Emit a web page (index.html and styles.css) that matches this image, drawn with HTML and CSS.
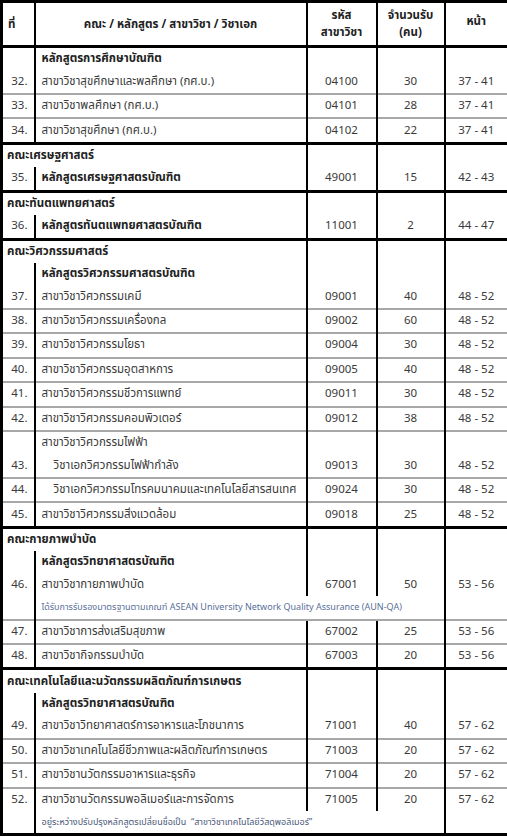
FILE: index.html
```html
<!DOCTYPE html>
<html lang="th">
<head>
<meta charset="utf-8">
<title>หลักสูตร</title>
<link rel="stylesheet" href="styles.css">
</head>
<body>
<table class="prog">
<colgroup>
<col class="w-no"><col class="w-name"><col class="w-code"><col class="w-qty"><col class="w-page">
</colgroup>
<thead>
<tr class="head">
<th class="h-no">ที่</th>
<th>คณะ / หลักสูตร / สาขาวิชา / วิชาเอก</th>
<th>รหัส<br>สาขาวิชา</th>
<th>จำนวนรับ<br>(คน)</th>
<th class="h-page">หน้า</th>
</tr>
</thead>
<tbody>
<tr><td class="no"></td><td class="name b">หลักสูตรการศึกษาบัณฑิต</td><td></td><td></td><td></td></tr>
<tr><td class="no">32.</td><td class="name">สาขาวิชาสุขศึกษาและพลศึกษา (กศ.บ.)</td><td>04100</td><td>30</td><td>37 - 41</td></tr>
<tr class="sep"><td class="no">33.</td><td class="name">สาขาวิชาพลศึกษา (กศ.บ.)</td><td>04101</td><td>28</td><td>37 - 41</td></tr>
<tr class="sep"><td class="no">34.</td><td class="name">สาขาวิชาสุขศึกษา (กศ.บ.)</td><td>04102</td><td>22</td><td>37 - 41</td></tr>

<tr class="fac"><td class="fname" colspan="2">คณะเศรษฐศาสตร์</td><td></td><td></td><td></td></tr>
<tr><td class="no">35.</td><td class="name b">หลักสูตรเศรษฐศาสตรบัณฑิต</td><td>49001</td><td>15</td><td>42 - 43</td></tr>

<tr class="fac"><td class="fname" colspan="2">คณะทันตแพทยศาสตร์</td><td></td><td></td><td></td></tr>
<tr><td class="no">36.</td><td class="name b">หลักสูตรทันตแพทยศาสตรบัณฑิต</td><td>11001</td><td>2</td><td>44 - 47</td></tr>

<tr class="fac"><td class="fname" colspan="2">คณะวิศวกรรมศาสตร์</td><td></td><td></td><td></td></tr>
<tr><td class="no"></td><td class="name b">หลักสูตรวิศวกรรมศาสตรบัณฑิต</td><td></td><td></td><td></td></tr>
<tr><td class="no">37.</td><td class="name">สาขาวิชาวิศวกรรมเคมี</td><td>09001</td><td>40</td><td>48 - 52</td></tr>
<tr class="sep"><td class="no">38.</td><td class="name">สาขาวิชาวิศวกรรมเครื่องกล</td><td>09002</td><td>60</td><td>48 - 52</td></tr>
<tr class="sep"><td class="no">39.</td><td class="name">สาขาวิชาวิศวกรรมโยธา</td><td>09004</td><td>30</td><td>48 - 52</td></tr>
<tr class="sep"><td class="no">40.</td><td class="name">สาขาวิชาวิศวกรรมอุตสาหการ</td><td>09005</td><td>40</td><td>48 - 52</td></tr>
<tr class="sep"><td class="no">41.</td><td class="name">สาขาวิชาวิศวกรรมชีวการแพทย์</td><td>09011</td><td>30</td><td>48 - 52</td></tr>
<tr class="sep"><td class="no">42.</td><td class="name">สาขาวิชาวิศวกรรมคอมพิวเตอร์</td><td>09012</td><td>38</td><td>48 - 52</td></tr>
<tr class="sep"><td class="no"></td><td class="name">สาขาวิชาวิศวกรรมไฟฟ้า</td><td></td><td></td><td></td></tr>
<tr><td class="no">43.</td><td class="name major">วิชาเอกวิศวกรรมไฟฟ้ากำลัง</td><td>09013</td><td>30</td><td>48 - 52</td></tr>
<tr class="sep"><td class="no">44.</td><td class="name major">วิชาเอกวิศวกรรมโทรคมนาคมและเทคโนโลยีสารสนเทศ</td><td>09024</td><td>30</td><td>48 - 52</td></tr>
<tr class="sep"><td class="no">45.</td><td class="name">สาขาวิชาวิศวกรรมสิ่งแวดล้อม</td><td>09018</td><td>25</td><td>48 - 52</td></tr>

<tr class="fac"><td class="fname" colspan="2">คณะกายภาพบำบัด</td><td></td><td></td><td></td></tr>
<tr><td class="no"></td><td class="name b">หลักสูตรวิทยาศาสตรบัณฑิต</td><td></td><td></td><td></td></tr>
<tr><td class="no">46.</td><td class="name">สาขาวิชากายภาพบำบัด</td><td>67001</td><td>50</td><td>53 - 56</td></tr>
<tr><td class="no"></td><td class="name note" colspan="3">ได้รับการรับรองมาตรฐานตามเกณฑ์ ASEAN University Network Quality Assurance (AUN-QA)</td><td></td></tr>
<tr class="sep"><td class="no">47.</td><td class="name">สาขาวิชาการส่งเสริมสุขภาพ</td><td>67002</td><td>25</td><td>53 - 56</td></tr>
<tr class="sep"><td class="no">48.</td><td class="name">สาขาวิชากิจกรรมบำบัด</td><td>67003</td><td>20</td><td>53 - 56</td></tr>

<tr class="fac"><td class="fname" colspan="2">คณะเทคโนโลยีและนวัตกรรมผลิตภัณฑ์การเกษตร</td><td></td><td></td><td></td></tr>
<tr><td class="no"></td><td class="name b">หลักสูตรวิทยาศาสตรบัณฑิต</td><td></td><td></td><td></td></tr>
<tr><td class="no">49.</td><td class="name">สาขาวิชาวิทยาศาสตร์การอาหารและโภชนาการ</td><td>71001</td><td>40</td><td>57 - 62</td></tr>
<tr class="sep"><td class="no">50.</td><td class="name">สาขาวิชาเทคโนโลยีชีวภาพและผลิตภัณฑ์การเกษตร</td><td>71003</td><td>20</td><td>57 - 62</td></tr>
<tr class="sep"><td class="no">51.</td><td class="name">สาขาวิชานวัตกรรมอาหารและธุรกิจ</td><td>71004</td><td>20</td><td>57 - 62</td></tr>
<tr class="sep"><td class="no">52.</td><td class="name">สาขาวิชานวัตกรรมพอลิเมอร์และการจัดการ</td><td>71005</td><td>20</td><td>57 - 62</td></tr>
<tr><td class="no"></td><td class="name note2" colspan="3">อยู่ระหว่างปรับปรุงหลักสูตรเปลี่ยนชื่อเป็น&nbsp; “สาขาวิชาเทคโนโลยีวัสดุพอลิเมอร์”</td><td></td></tr>
</tbody>
</table>
</body>
</html>
```
FILE: styles.css
```css
html, body {
  margin: 0;
  padding: 0;
  background: #fff;
}
.prog {
  border-collapse: collapse;
  table-layout: fixed;
  width: 507px;
  border: 3px solid #000;
  font-family: Tahoma, "Noto Sans Thai", "Loma", "Garuda", "DejaVu Sans", sans-serif;
  font-size: 11.5px;
  line-height: 14px;
  color: #3a3a3a;
}
.w-no { width: 33px; }
.w-name { width: 272px; }
.w-code { width: 70px; }
.w-qty { width: 68px; }
.w-page { width: 64px; }

.prog th {
  height: 36px;
  padding: 0;
  font-weight: bold;
  color: #222;
  line-height: 17px;
  text-align: center;
  vertical-align: middle;
  border-left: 2px solid #000;
  border-bottom: 3px solid #000;
}
.prog th.h-no { border-left: none; text-align: left; padding-left: 5px; }
.prog th.h-page { padding-bottom: 6px; }

.prog td {
  height: 22.45px;
  padding: 0;
  text-align: center;
  vertical-align: middle;
  white-space: nowrap;
  overflow: visible;
  border-left: 2px solid #000;
}
.prog td.no {
  border-left: none;
  text-align: right;
  padding-right: 6px;
}
.prog td.name {
  text-align: left;
  padding-left: 6px;
}
.prog td.major { padding-left: 18px; }
.prog td.b { font-weight: bold; color: #222; }
.prog td.note {
  color: #5b6f9a;
  font-size: 9px;
}
.prog td.note2 {
  color: #4a587a;
  font-size: 9px;
}
.prog tr.sep td { border-top: 2px solid #a8a8a8; }
.prog tr.fac td { border-top: 3px solid #000; }
.prog td.fname {
  border-left: none;
  text-align: left;
  padding-left: 4px;
  font-weight: bold;
  color: #222;
}
```
